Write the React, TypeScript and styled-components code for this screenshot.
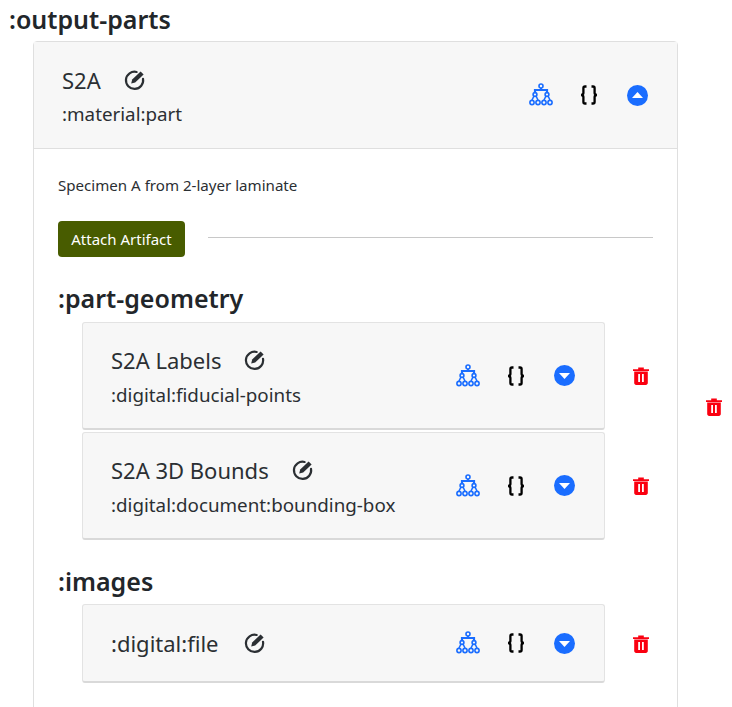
import React from "react";
import styled, { createGlobalStyle } from "styled-components";

const Global = createGlobalStyle`
  html, body { margin: 0; padding: 0; background: #fff; height: 707px; overflow: hidden; }
  body { font-family: "Noto Sans", "Open Sans", sans-serif; color: #212529; }
  * { box-sizing: border-box; }
`;
const Page = styled.div`
  width: 732px;
  padding: 4px 0 0 9px;
`;
const SectionTitle = styled.h4`
  margin: 0;
  font-size: 25px;
  line-height: 30px;
  font-weight: 600;
  color: #22262a;
`;
const Row = styled.div`
  display: flex;
  align-items: center;
`;
const OuterRow = styled(Row)`
  padding-left: 24px;
  margin-top: 7px;
  align-items: flex-start;
`;
const OuterCard = styled.div`
  width: 645px;
  flex: none;
  height: 720px;
  border: 1px solid #dfdfdf;
  border-radius: 4px 4px 0 0;
`;
const OuterHeader = styled.div`
  height: 107px;
  background: #f7f7f7;
  border-bottom: 1px solid #dfdfdf;
  display: flex;
  align-items: center;
  justify-content: space-between;
  padding: 0 29px 0 28px;
`;
const OuterBody = styled.div`
  padding: 26px 24px 24px;
`;
const Names = styled.div<{ $gap: number; $top: number }>`
  display: flex;
  flex-direction: column;
  gap: ${(p) => p.$gap}px;
  padding-top: ${(p) => p.$top}px;
`;
const NameLine = styled.div<{ $gap: number }>`
  display: flex;
  align-items: center;
  gap: ${(p) => p.$gap}px;
  font-size: 22px;
  line-height: 26px;
  color: #2b2f33;
`;
const TypeLine = styled.div`
  font-size: 18.8px;
  line-height: 26px;
  color: #2b2f33;
`;
const Actions = styled.div`
  display: flex;
  align-items: center;
  gap: 26px;
`;
const BracesSlot = styled.span`
  display: flex;
  margin-right: 2px;
`;
const Description = styled.p`
  margin: 0;
  font-size: 15.1px;
  line-height: 21px;
  color: #2b2f33;
`;
const AttachRow = styled(Row)`
  margin-top: 25px;
  gap: 23px;
`;
const AttachButton = styled.button`
  height: 36px;
  width: 127px;
  border: none;
  border-radius: 4px;
  background: #485c00;
  color: #fff;
  font: inherit;
  font-size: 15px;
  padding: 0;
`;
const Rule = styled.hr`
  flex: 1;
  margin: 0 0 3px;
  border: none;
  border-top: 1px solid #c8c8c8;
`;
const GroupTitle = styled(SectionTitle)`
  margin-top: 26px;
`;
const Group = styled.div<{ $top: number }>`
  margin-top: ${(p) => p.$top}px;
  padding-left: 24px;
  display: flex;
  flex-direction: column;
  gap: 2px;
`;
const ItemCard = styled.div<{ $h: number }>`
  width: 523px;
  height: ${(p) => p.$h}px;
  background: #f7f7f7;
  border: 1px solid #e3e3e3;
  border-bottom: 2px solid #d9d9d9;
  border-radius: 3px;
  display: flex;
  align-items: center;
  justify-content: space-between;
  padding: 0 29px 0 28px;
`;
const TrashSlot = styled.div<{ $w: number; $top?: number }>`
  width: ${(p) => p.$w}px;
  margin-top: ${(p) => p.$top ?? 0}px;
  display: flex;
  justify-content: flex-end;
`;

const Tree = () => (
  <svg width="24" height="24" viewBox="0 0 24 24" fill="none" stroke="#1a6dff" strokeWidth="1.6">
    <circle cx="12" cy="3" r="2" />
    <path d="M12 5v2" strokeWidth="2" />
    <path d="M6 10V7h12v3" strokeWidth="2.2" />
    <circle cx="6" cy="11.5" r="1.9" />
    <circle cx="18" cy="11.5" r="1.9" />
    <path d="M5 13l-2 4M7 13l2 4M17 13l-2 4M19 13l2 4" />
    <circle cx="3" cy="19.5" r="2.1" />
    <circle cx="9" cy="19.5" r="2.1" />
    <circle cx="15" cy="19.5" r="2.1" />
    <circle cx="21" cy="19.5" r="2.1" />
  </svg>
);
const Braces = () => (
  <svg width="20" height="20" viewBox="0 0 20 20" fill="none" stroke="#000" strokeWidth="2.3">
    <path d="M7.5 1.5H6C5 1.5 4.4 2.1 4.4 3.1V8c0 1-.8 1.8-2.2 2 1.4.2 2.2 1 2.2 2v4.9c0 1 .6 1.6 1.6 1.6h1.5" />
    <path d="M12.5 1.5H14c1 0 1.6.6 1.6 1.6V8c0 1 .8 1.8 2.2 2-1.4.2-2.2 1-2.2 2v4.9c0 1-.6 1.6-1.6 1.6h-1.5" />
  </svg>
);
const Caret = ({ up }: { up?: boolean }) => (
  <svg width="21" height="21" viewBox="0 0 21 21">
    <circle cx="10.5" cy="10.5" r="10.5" fill="#1a6dff" />
    <path d={up ? "M10.5 7l5.5 6H5z" : "M10.5 14l5.5-6H5z"} fill="#fff" />
  </svg>
);
const Edit = () => (
  <svg width="22" height="22" viewBox="0 0 22 22" fill="none">
    <path d="M12.6 3A8.6 8.6 0 1 0 19 9.8" stroke="#2b2f33" strokeWidth="2.2" strokeLinecap="round" />
    <path d="M7.2 14.6l1-4.2 8.4-8 3 3-8.4 8z" fill="#2b2f33" />
  </svg>
);
const Trash = () => (
  <svg width="16" height="18" viewBox="0 0 16 18">
    <path d="M0 2.2h5.2V.6h5.6v1.6H16v1.8H0z" fill="#fa0010" />
    <path fillRule="evenodd" d="M1.2 4.6h13.6V16c0 1.1-.8 1.9-1.9 1.9H3.1c-1.1 0-1.9-.8-1.9-1.9zM5.2 7v8h1.8V7zm3.8 0v8h1.8V7z" fill="#fa0010" />
  </svg>
);

const IconSet = ({ up }: { up?: boolean }) => (
  <Actions>
    <Tree />
    <BracesSlot>
      <Braces />
    </BracesSlot>
    <Caret up={up} />
  </Actions>
);

const Item = ({ name, type, h }: { name?: string; type: string; h: number }) => (
  <Row>
    <ItemCard $h={h}>
      {name ? (
        <Names $gap={9} $top={4}>
          <NameLine $gap={23}>
            {name}
            <Edit />
          </NameLine>
          <TypeLine>{type}</TypeLine>
        </Names>
      ) : (
        <Names $gap={0} $top={0}>
          <NameLine $gap={25}>
            {type}
            <Edit />
          </NameLine>
        </Names>
      )}
      <IconSet />
    </ItemCard>
    <TrashSlot $w={44}>
      <Trash />
    </TrashSlot>
  </Row>
);

export default function App() {
  return (
    <Page>
      <Global />
      <SectionTitle>:output-parts</SectionTitle>
      <OuterRow>
        <OuterCard>
          <OuterHeader>
            <Names $gap={8} $top={3}>
              <NameLine $gap={23}>
                S2A
                <Edit />
              </NameLine>
              <TypeLine>:material:part</TypeLine>
            </Names>
            <IconSet up />
          </OuterHeader>
          <OuterBody>
            <Description>Specimen A from 2-layer laminate</Description>
            <AttachRow>
              <AttachButton>Attach Artifact</AttachButton>
              <Rule />
            </AttachRow>
            <GroupTitle>:part-geometry</GroupTitle>
            <Group $top={9}>
              <Item name="S2A Labels" type=":digital:fiducial-points" h={108} />
              <Item name="S2A 3D Bounds" type=":digital:document:bounding-box" h={108} />
            </Group>
            <GroupTitle>:images</GroupTitle>
            <Group $top={8}>
              <Item type=":digital:file" h={79} />
            </Group>
          </OuterBody>
        </OuterCard>
        <TrashSlot $w={44} $top={357}>
          <Trash />
        </TrashSlot>
      </OuterRow>
    </Page>
  );
}
